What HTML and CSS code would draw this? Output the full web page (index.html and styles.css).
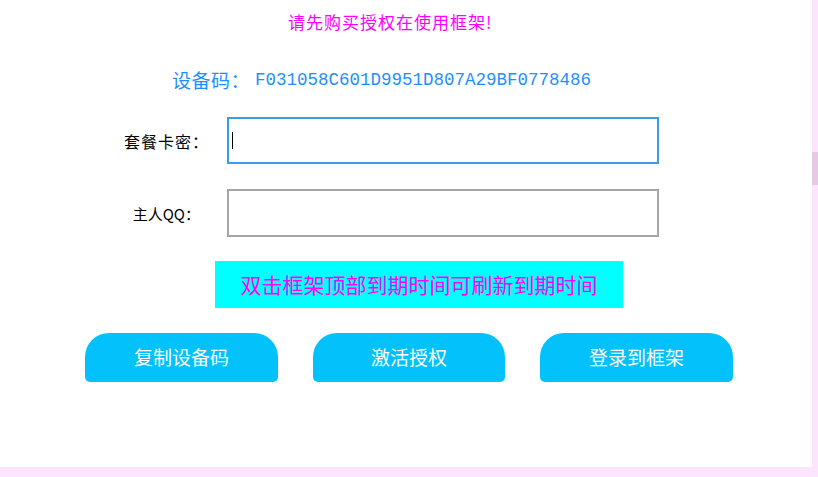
FILE: index.html
```html
<!DOCTYPE html>
<html lang="zh-CN">
<head>
<meta charset="utf-8">
<title>授权</title>
<link rel="stylesheet" href="styles.css">
</head>
<body>
<div class="frame">
  <div class="main">
    <div class="title">请先购买授权在使用框架!</div>
    <div class="device"><span class="device-label">设备码：</span><span class="code">F031058C601D9951D807A29BF0778486</span></div>
    <div class="row row-first">
      <span class="label">套餐卡密：</span>
      <div class="field field-focus"><span class="caret"></span></div>
    </div>
    <div class="row row-second">
      <span class="label label-qq">主人QQ：</span>
      <div class="field"></div>
    </div>
    <div class="notice">双击框架顶部到期时间可刷新到期时间</div>
    <div class="buttons">
      <div class="btn">复制设备码</div>
      <div class="btn">激活授权</div>
      <div class="btn">登录到框架</div>
    </div>
  </div>
  <div class="scroll"><div class="thumb"></div></div>
</div>
<div class="bottom"></div>
</body>
</html>
```

FILE: styles.css
```css
html, body {
  margin: 0;
  padding: 0;
  background: #fde6fd;
  font-family: "Noto Sans CJK SC", "Microsoft YaHei", sans-serif;
}
.frame {
  display: flex;
  width: 818px;
  height: 467px;
}
.main {
  width: 812px;
  height: 467px;
  background: #ffffff;
  display: flex;
  flex-direction: column;
}
.scroll {
  width: 6px;
  background: #fde6fd;
  padding-top: 152px;
}
.thumb {
  height: 33px;
  background: #e6c9e4;
}
.bottom {
  height: 10px;
  background: #fde6fd;
}
.title {
  margin-top: 10px;
  margin-left: 288px;
  height: 24px;
  line-height: 24px;
  font-size: 17px;
  color: #ff00ff;
  letter-spacing: 1px;
}
.device {
  margin-top: 33px;
  margin-left: 172px;
  height: 26px;
  line-height: 26px;
  color: #1e8fff;
  font-size: 19px;
  display: flex;
  align-items: center;
}
.device-label {
  letter-spacing: 0.5px;
}
.code {
  font-family: "Liberation Mono", "DejaVu Sans Mono", monospace;
  font-size: 17.5px;
  margin-left: 5px;
}
.row {
  display: flex;
  align-items: center;
}
.row-first {
  margin-top: 24px;
  height: 47px;
}
.row-second {
  margin-top: 25px;
  height: 48px;
}
.label {
  width: 227px;
  box-sizing: border-box;
  padding-right: 18px;
  text-align: right;
  font-size: 16px;
  letter-spacing: 1px;
  color: #000000;
}
.label-qq {
  font-size: 15px;
  letter-spacing: 0;
  padding-right: 27px;
}
.field {
  width: 432px;
  height: 100%;
  box-sizing: border-box;
  border: 2px solid #a6a6a6;
  background: #ffffff;
  display: flex;
  align-items: center;
}
.field-focus {
  border-color: #3d9ae8;
}
.caret {
  width: 1px;
  height: 17px;
  margin-left: 3px;
  background: #000000;
}
.notice {
  margin-top: 24px;
  margin-left: 215px;
  width: 408px;
  height: 47px;
  background: #00ffff;
  color: #ff00ff;
  font-size: 21px;
  line-height: 47px;
  text-align: center;
}
.buttons {
  margin-top: 25px;
  margin-left: 85px;
  display: flex;
  gap: 35px;
}
.btn {
  width: 193px;
  height: 49px;
  background: #03c2fb;
  color: #ffffff;
  border-radius: 24px 24px 5px 5px;
  font-size: 19px;
  line-height: 48px;
  text-align: center;
}
.btn:nth-child(2) {
  width: 192px;
}
```
